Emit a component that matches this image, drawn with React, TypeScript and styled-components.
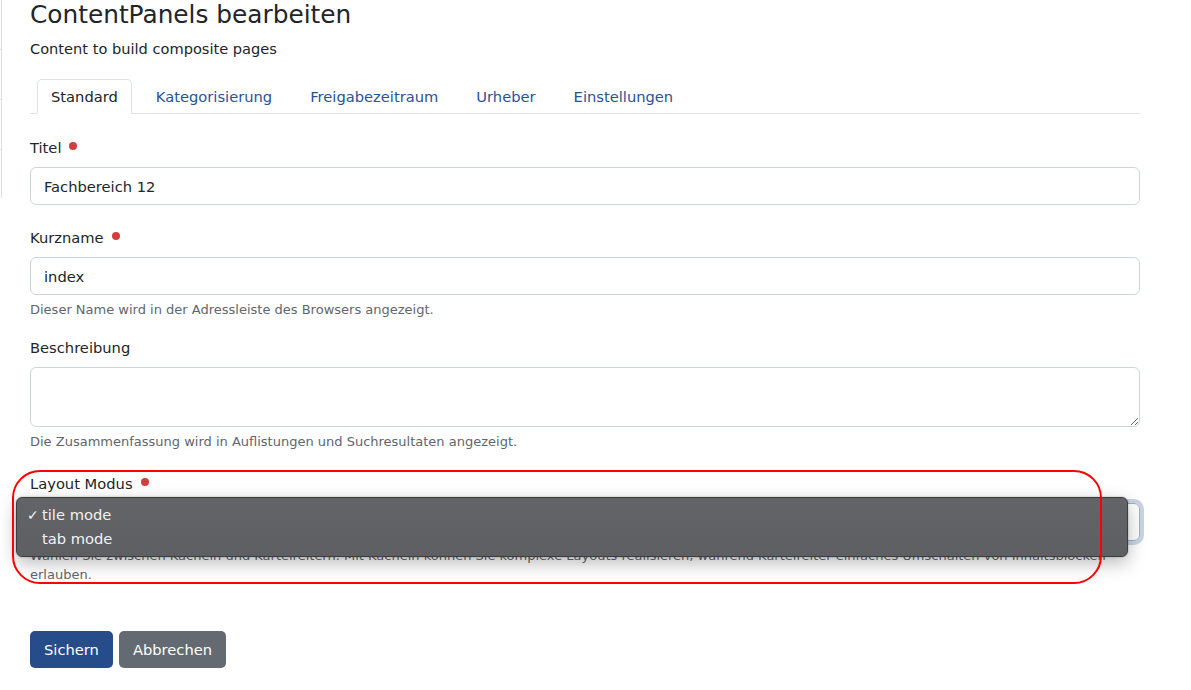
import React from 'react';
import styled, { createGlobalStyle } from 'styled-components';

const GlobalStyle = createGlobalStyle`
  html, body {
    margin: 0;
    padding: 0;
    background: #ffffff;
  }
  body {
    font-family: Verdana, "DejaVu Sans", sans-serif;
    color: #212529;
    font-size: 14.7px;
  }
  * {
    box-sizing: border-box;
  }
`;

const Page = styled.div`
  display: flex;
  align-items: flex-start;
  min-height: 690px;
`;

const SideStub = styled.div`
  width: 2px;
  display: flex;
  flex-direction: column;
  border-right: 1px solid #dcdee1;
  border-bottom-right-radius: 3px;
`;

const SideItem = styled.div`
  height: 50px;
  border-bottom: 1px solid #dcdee1;

  &:last-child {
    height: 48px;
    border-bottom: none;
  }
`;

const Main = styled.main`
  margin-left: 28px;
  width: 1110px;
`;

const Title = styled.h1`
  margin: 0;
  font-size: 24.8px;
  line-height: 30px;
  font-weight: 400;
  color: #212529;
`;

const Lead = styled.p`
  margin: 9px 0 0;
  font-size: 14.6px;
  line-height: 20px;
`;

const TabBar = styled.nav`
  display: flex;
  gap: 10px;
  margin-top: 20px;
  padding-left: 7px;
  border-bottom: 1px solid #dee2e6;
`;

const Tab = styled.a<{ $active?: boolean }>`
  display: block;
  height: 35px;
  padding: 0 13px;
  margin-bottom: -1px;
  line-height: 34px;
  font-size: 14.7px;
  text-decoration: none;
  cursor: pointer;
  color: ${p => (p.$active ? '#212529' : '#2a5394')};
  background: ${p => (p.$active ? '#fff' : 'transparent')};
  border: 1px solid ${p => (p.$active ? '#dee2e6' : 'transparent')};
  border-bottom-color: ${p => (p.$active ? '#fff' : 'transparent')};
  border-radius: 5px 5px 0 0;
`;

const Form = styled.form`
  margin-top: 23px;
`;

const Field = styled.div<{ $gap?: number }>`
  position: relative;
  margin-bottom: ${p => p.$gap ?? 20}px;
`;

const Label = styled.label`
  display: flex;
  align-items: center;
  gap: 8px;
  margin-bottom: 8px;
  font-size: 14.7px;
  line-height: 22px;
`;

const Required = styled.span`
  width: 8px;
  height: 8px;
  margin-top: -5px;
  border-radius: 50%;
  background: #d33d3d;
`;

const Input = styled.input`
  display: block;
  width: 100%;
  height: 38px;
  padding: 0 13px;
  font: inherit;
  font-size: 14.7px;
  color: #212529;
  border: 1px solid #ced4da;
  border-radius: 6px;
  outline: none;
`;

const TextArea = styled.textarea`
  display: block;
  width: 100%;
  height: 60px;
  padding: 8px 13px;
  font: inherit;
  font-size: 14.7px;
  border: 1px solid #ced4da;
  border-radius: 6px;
  resize: vertical;
  outline: none;
`;

const Help = styled.div`
  margin-top: 5px;
  font-size: 13px;
  line-height: 19px;
  color: #5f666d;
`;

const SelectBox = styled.div`
  height: 38px;
  padding: 0 13px;
  line-height: 36px;
  border: 1px solid #9db0cf;
  border-radius: 6px;
  box-shadow: 0 0 0 4px rgba(42, 83, 148, 0.25);
  color: #212529;
`;

const Menu = styled.ul`
  position: absolute;
  z-index: 2;
  left: -14px;
  top: 24px;
  width: 1112px;
  height: 60px;
  margin: 0;
  padding: 5px 0 0;
  list-style: none;
  background: linear-gradient(180deg, #626467 0%, #5d5f62 100%);
  border: 1px solid #3c3d3f;
  border-radius: 6px;
  box-shadow: 0 6px 18px rgba(0, 0, 0, 0.28), 0 0 2px rgba(0, 0, 0, 0.3);
  -webkit-font-smoothing: antialiased;
`;

const MenuItem = styled.li`
  position: relative;
  height: 24px;
  padding-left: 25px;
  line-height: 24px;
  font-size: 14.7px;
  color: #f2f2f2;
`;

const Check = styled.span`
  position: absolute;
  left: 10px;
  top: 0;
  font-size: 14px;
`;

const Marker = styled.div`
  position: absolute;
  z-index: 3;
  left: -18px;
  top: -3px;
  width: 1090px;
  height: 114px;
  border: 2px solid #ff0000;
  border-radius: 28px;
  pointer-events: none;
`;

const Actions = styled.div`
  display: flex;
  gap: 6px;
  margin-top: 47px;
`;

const Button = styled.button<{ $variant: 'primary' | 'secondary' }>`
  height: 37px;
  padding: 0 14px;
  font: inherit;
  font-size: 14.7px;
  color: #fff;
  border: none;
  border-radius: 5px;
  cursor: pointer;
  background: ${p => (p.$variant === 'primary' ? '#264c89' : '#646a71')};
`;

const tabs = ['Standard', 'Kategorisierung', 'Freigabezeitraum', 'Urheber', 'Einstellungen'];

export default function App() {
  return (
    <>
      <GlobalStyle />
      <Page>
        <SideStub>
          <SideItem />
          <SideItem />
          <SideItem />
          <SideItem />
        </SideStub>
        <Main>
          <Title>ContentPanels bearbeiten</Title>
          <Lead>Content to build composite pages</Lead>

          <TabBar>
            {tabs.map((t, i) => (
              <Tab key={t} $active={i === 0}>{t}</Tab>
            ))}
          </TabBar>

          <Form onSubmit={e => e.preventDefault()}>
            <Field $gap={22}>
              <Label>Titel <Required /></Label>
              <Input defaultValue="Fachbereich 12" />
            </Field>

            <Field $gap={18}>
              <Label>Kurzname <Required /></Label>
              <Input defaultValue="index" />
              <Help>Dieser Name wird in der Adressleiste des Browsers angezeigt.</Help>
            </Field>

            <Field $gap={22}>
              <Label>Beschreibung</Label>
              <TextArea />
              <Help>Die Zusammenfassung wird in Auflistungen und Suchresultaten angezeigt.</Help>
            </Field>

            <Field $gap={0}>
              <Label>Layout Modus <Required /></Label>
              <SelectBox>tile mode</SelectBox>
              <Help>
                Wählen Sie zwischen Kacheln und Karteireitern. Mit Kacheln können Sie komplexe Layouts realisieren,
                während Karteireiter einfaches Umschalten von Inhaltsblöcken erlauben.
              </Help>
              <Menu>
                <MenuItem><Check>✓</Check>tile mode</MenuItem>
                <MenuItem>tab mode</MenuItem>
              </Menu>
              <Marker />
            </Field>

            <Actions>
              <Button type="submit" $variant="primary">Sichern</Button>
              <Button type="button" $variant="secondary">Abbrechen</Button>
            </Actions>
          </Form>
        </Main>
      </Page>
    </>
  );
}
